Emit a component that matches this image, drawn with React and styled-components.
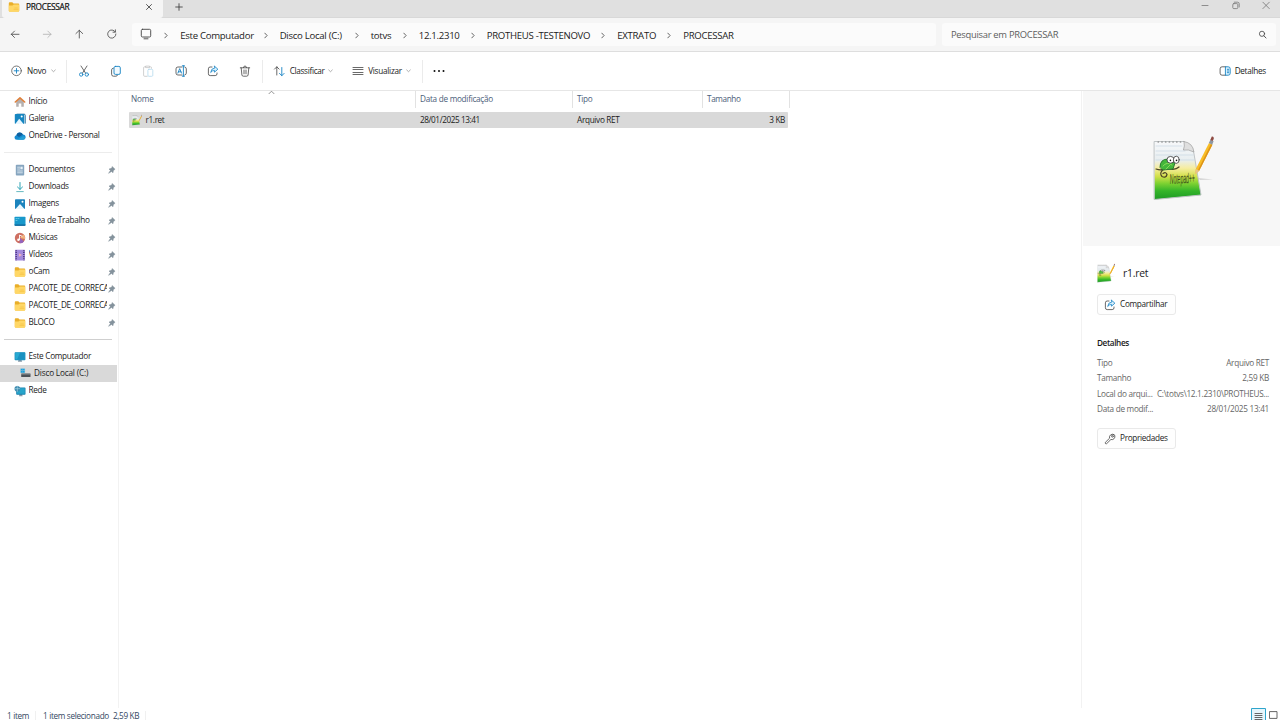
/* eslint-disable react/prop-types */
import React from 'react';
import styled, { createGlobalStyle } from 'styled-components';

const GlobalStyle = createGlobalStyle`
  * { box-sizing: border-box; }
  body {
    margin: 0;
    overflow: hidden;
    font-family: "Open Sans", "Noto Sans", sans-serif;
    font-size: 8.2px;
    color: #1b1b1b;
    background: #fff;
  }
  svg { display: block; flex: none; }
`;

const Window = styled.div`
  display: flex;
  flex-direction: column;
  width: 1280px;
  height: 720px;
  overflow: hidden;
  background: #fff;
`;

const Label = styled.span`
  flex: none;
  white-space: nowrap;
  letter-spacing: ${(p) => p.$ls || 0}px;
`;
const SmallLabel = styled(Label)`
  margin-bottom: 1.5px;
`;

/* title bar */
const TitleBar = styled.div`
  display: flex;
  height: 18px;
  padding-left: 2px;
  background: #e0e0e0;
  border-bottom: 1px solid #d8d8d8;
`;
const Tab = styled.div`
  display: flex;
  align-items: center;
  width: 161px;
  height: 18px;
  padding: 0 10px 5px 6px;
  background: #f5f5f5;
  border-radius: 0 0 3px 3px;
  font-size: 8.3px;
  color: #111;
  -webkit-text-stroke: 0.2px #111;
`;
const TabTitle = styled(Label)`
  flex: 1;
  margin-left: 6px;
`;
const NewTab = styled.div`
  padding: 3px 0 0 11.5px;
`;
const WindowButtons = styled.div`
  display: flex;
  margin-left: auto;
  padding: 1px 9px 0 0;
  gap: 20.5px;
`;

/* navigation */
const NavBar = styled.div`
  display: flex;
  align-items: center;
  height: 34px;
  padding: 0 4px 1px 10px;
  background: #f5f5f5;
  border-bottom: 1px solid #dedede;
`;
const NavButtons = styled.div`
  display: flex;
  gap: 22px;
  width: 122px;
`;
const AddressBox = styled.div`
  display: flex;
  align-items: center;
  width: 804px;
  height: 23px;
  margin-right: 6px;
  padding-left: 8px;
  background: #fbfbfb;
  border-radius: 3px;
  font-size: 9.6px;
`;
const Crumb = styled.div`
  display: flex;
  align-items: center;
  gap: 12.2px;
  width: ${(p) => p.$width}px;
  padding-top: 2px;
`;
const SearchBox = styled.div`
  display: flex;
  align-items: center;
  justify-content: space-between;
  flex: 1;
  height: 23px;
  padding: 0 9px;
  background: #fbfbfb;
  border-radius: 3px;
  font-size: 9.4px;
  color: #5d5d5d;
`;

/* command bar */
const CommandBar = styled.div`
  display: flex;
  align-items: center;
  height: 39px;
  padding: 0 14px 0 10px;
  border-bottom: 1px solid #e6e6e6;
`;
const Command = styled.div`
  display: flex;
  align-items: center;
  gap: ${(p) => p.$gap || 4}px;
  width: ${(p) => p.$width}px;
  margin-left: ${(p) => p.$left || 0}px;
`;
const IconGroup = styled.div`
  display: flex;
  padding: 0 1px;
`;
const IconCommand = styled.div`
  display: flex;
  justify-content: center;
  width: 32.2px;
`;
const Separator = styled.div`
  width: 1px;
  height: 23px;
  background: #ebebeb;
`;
const DetailsToggle = styled.div`
  display: flex;
  align-items: center;
  gap: 4px;
  margin-left: auto;
`;

/* body */
const Body = styled.div`
  display: flex;
  flex: 1;
  min-height: 0;
`;
const Sidebar = styled.nav`
  width: 119px;
  height: 617px;
  padding-top: 2px;
  border-right: 1px solid #f2f2f2;
`;
const SideItem = styled.div`
  display: flex;
  align-items: center;
  width: 117px;
  height: 17px;
  padding-left: ${(p) => (p.$nested ? 20 : 14)}px;
  background: ${(p) => (p.$selected ? '#d9d9d9' : 'transparent')};
`;
const SideLabel = styled(SmallLabel)`
  flex: 1;
  min-width: 0;
  margin-left: ${(p) => (p.$nested ? 3 : 2.5)}px;
  overflow: hidden;
`;
const PinSlot = styled.div`
  width: 10px;
`;
const SideDivider = styled.div`
  width: 108px;
  height: 1px;
  margin: 8px 0 8px 4px;
  background: ${(p) => p.$color};
`;

const FileList = styled.main`
  position: relative;
  flex: 1;
  padding-left: 10px;
`;
const HeaderRow = styled.div`
  display: grid;
  grid-template-columns: 287px 157px 130px 87px;
  height: 17px;
  color: #4c607a;
`;
const HeaderCell = styled.div`
  display: flex;
  align-items: center;
  padding: 0 0 0 ${(p) => p.$pad || 4}px;
  border-right: 1px solid #e2e2e2;
`;
const SortMark = styled.div`
  position: absolute;
  top: -1px;
  left: 149px;
`;
const FileRow = styled.div`
  display: grid;
  grid-template-columns: 287px 157px 130px 84px;
  align-items: center;
  width: 659px;
  height: 16px;
  margin-top: 4px;
  background: #d9d9d9;
  border-radius: 1px;
`;
const FileCell = styled.div`
  display: flex;
  align-items: center;
  justify-content: ${(p) => (p.$right ? 'flex-end' : 'flex-start')};
  gap: 3.5px;
  padding: 0 2px 0 3px;
  padding-left: ${(p) => p.$pad || 3}px;
`;

/* details pane */
const DetailsPane = styled.aside`
  width: 199px;
  height: 617px;
  border-left: 1px solid #f2f2f2;
`;
const Preview = styled.div`
  height: 155px;
  margin-left: 1px;
  padding: 44px 0 0 70px;
  background: #f7f7f7;
`;
const PaneContent = styled.div`
  display: flex;
  flex-direction: column;
  align-items: flex-start;
  padding: 17px 11px 0 15px;
`;
const PaneTitle = styled.div`
  display: flex;
  align-items: center;
  gap: 8px;
  height: 20px;
  font-size: 10.4px;
`;
const PaneButton = styled.button`
  display: flex;
  align-items: center;
  gap: 4px;
  width: 79px;
  height: 21px;
  margin: ${(p) => p.$top}px 0 0;
  padding: 0 0 0 6px;
  background: #fefefe;
  border: 1px solid #e9e9e9;
  border-radius: 3px;
  font: inherit;
  color: #1b1b1b;
`;
const PaneHeading = styled.h2`
  margin: 21px 0 5px;
  font-size: 8.2px;
  font-weight: 600;
  line-height: 14px;
  letter-spacing: -0.38px;
`;
const Property = styled.div`
  display: flex;
  justify-content: space-between;
  align-items: center;
  width: 172px;
  height: 15.5px;
  color: #666;
`;

const StatusBar = styled.footer`
  display: flex;
  align-items: flex-start;
  position: absolute;
  left: 0;
  top: 708px;
  width: 1280px;
  height: 12px;
  padding: 0 2px 0 7px;
  color: #33475f;
`;
const StatusText = styled(Label)`
  width: ${(p) => p.$width}px;
  height: 10px;
  margin-top: 2px;
  line-height: 11px;
`;
const StatusSeparator = styled.div`
  width: 1px;
  height: 9px;
  margin: 3px 7px 0 0;
  background: #f0f0f0;
`;
const ViewModes = styled.div`
  display: flex;
  gap: 3px;
  margin-left: auto;
`;

const Svg = ({ w = 12, h = w, box, children }) => (
  <svg width={w} height={h} viewBox={box || `0 0 ${w} ${h}`} fill="none" strokeLinecap="round" strokeLinejoin="round">
    {children}
  </svg>
);

const dark = '#444';
const blue = '#1683c4';

const Chevron = ({ down }) => (down ? (
  <Svg w={5} h={4}><path d="M.7 1 2.5 2.7 4.3 1" stroke="#8a8a8a" strokeWidth=".7" /></Svg>
) : (
  <Svg w={4} h={7}><path d="M.8 1.1 3.1 3.5.8 5.9" stroke="#555" strokeWidth=".9" /></Svg>
));

const Folder = () => (
  <Svg w={12}>
    <path d="M.8 2.2q0-.9.9-.9h2.6l1.2 1.2h4.8q.9 0 .9.9v6.4q0 .8-.9.8H1.7q-.9 0-.9-.8z" fill="#e9ae29" />
    <path d="M.8 4.4h3.7l1.2-1h4.6q.9 0 .9.8v5.6q0 .9-.9.9H1.7q-.9 0-.9-.9z" fill="#ffd766" />
    <path d="M6 8.4h4M6.8 7h2.5" stroke="#f4bf40" strokeWidth=".6" />
  </Svg>
);

const NotepadFile = ({ w, h }) => {
  const id = `grass${w}`;
  return (
    <Svg w={w} h={h} box="0 0 61 66">
      <defs>
        <linearGradient id={id} x1="0" y1="0" x2="0" y2="1">
          <stop offset="0" stopColor="#f7f8fa" />
          <stop offset=".32" stopColor="#e8eef0" />
          <stop offset=".46" stopColor="#f6eda0" />
          <stop offset=".6" stopColor="#d3e04a" />
          <stop offset=".72" stopColor="#7fd232" />
          <stop offset=".85" stopColor="#35b52a" />
          <stop offset="1" stopColor="#1d9a25" />
        </linearGradient>
      </defs>
      <path d="M45 43l15 1.5-13 .5z" fill="#d5d5d5" />
      <path d="M1.5 6.5H31l9.5 9.5L48 60 1.5 64.5z" fill={`url(#${id})`} stroke="#bfc4c6" strokeWidth="1" />
      <path d="M3 16h29M3 20h37M3 11h26M3 25h38" stroke="#c4d3e1" strokeWidth=".6" />
      <path d="M5 7h25" stroke="#777" strokeWidth="1.1" strokeDasharray=".6 3.1" />
      <path d="M31 6.5q1 5-.6 8.5 5-1 10.5 2Q40 8 31 6.5z" fill="#dfdfdf" stroke="#9d9d9d" strokeWidth=".7" />
      <path d="M3 34q6 2 10-1 9 3 13-1M10 35q-4 3-1 6.5 4 2 5-2-1-3-4-1" stroke="#4c4426" strokeWidth="1.2" />
      <path d="M7 32q0-8 8-8l7 4-2 6-10 1z" fill="#43b63b" stroke="#26732b" strokeWidth=".9" />
      <path d="M10 31q4-5 9-1M13 34l4-4" stroke="#8bdb5a" strokeWidth="1" />
      <ellipse cx="17.6" cy="24.8" rx="3.6" ry="3.4" fill="#fff" stroke="#333" strokeWidth=".8" />
      <ellipse cx="23.3" cy="24.8" rx="2.9" ry="3.6" fill="#fff" stroke="#333" strokeWidth=".8" />
      <circle cx="17.4" cy="25.4" r=".8" fill="#111" />
      <circle cx="23.5" cy="25.4" r=".8" fill="#111" />
      {w > 30 && (
        <text x="0" y="0" transform="translate(17 49) rotate(-3) scale(.46 1.3)" fontFamily="Liberation Sans, sans-serif" fontStyle="italic" fontSize="11" fill="#3a4a18">Notepad++</text>
      )}
      <path d="M42.2 39.2l.6-5.2L56 8l3.4 1.8-13.2 26z" fill="#f8bd25" />
      <path d="M44.9 35.2L58 9l1.4.8-13.2 26z" fill="#dc9219" />
      <path d="M42.2 39.2l.6-5.2 3.4 1.8z" fill="#e6c38c" />
      <path d="M55.8 8l1.8-3.4 3 1.6-1.4 3.6z" fill="#8e98a2" />
      <path d="M57.3 4.9L58.8 1.6q2.4-.6 1.9 2.4l-1 2.1z" fill="#8f4b43" />
    </Svg>
  );
};

const ShareIcon = () => (
  <Svg w={12}>
    <path d="M5 2H3.2Q1.4 2 1.4 3.8v5Q1.4 10.6 3.2 10.6h5q1.8 0 1.8-1.8V8" stroke={dark} strokeWidth=".8" />
    <path d="M7.5 1.2 10.9 4.2 7.5 7.2V5.5Q5 5.4 3.7 7.5 4 3.3 7.5 3z" fill="#d6effc" stroke={blue} strokeWidth=".8" />
  </Svg>
);

const sideIcons = {
  home: (
    <Svg w={12}>
      <path d="M2.2 5.4 6 2l3.8 3.4v5.4H7.3V7.6H4.7v3.2H2.2z" fill="#b5b0af" />
      <path d="M1.3 6 6 1.8 10.7 6" stroke="#e0813b" strokeWidth="1.6" />
    </Svg>
  ),
  gallery: (
    <Svg w={12}>
      <path d="M3 1.2h7.2q1 0 1 1v8" stroke="#1d6f9f" strokeWidth="1" />
      <rect x=".8" y="1" width="9.4" height="10" rx=".8" fill="#1686c1" />
      <path d="M1.2 11l4-5.2 4.4 5.2z" fill="#e9f7ff" />
      <circle cx="7.7" cy="3.5" r="1" fill="#fff" />
    </Svg>
  ),
  cloud: (
    <Svg w={12}>
      <path d="M2.8 9.7Q.5 9.5.5 7.4q0-1.7 1.9-2.1Q3 2.5 5.7 2.4q2.3 0 3.2 2.2 2.7.1 2.7 2.6-.1 2.4-2.5 2.5z" fill="#168bd0" />
      <path d="M2.4 5.3Q3 2.5 5.7 2.4q2.3 0 3.2 2.2L5 6.9z" fill="#0f609f" />
      <path d="M3 9.7 9.3 6l2.2 1.7q-.5 2-2.4 2z" fill="#27a0d6" />
    </Svg>
  ),
  docs: (
    <Svg w={12}>
      <rect x="1.8" y=".8" width="8.4" height="10.6" rx=".9" fill="#86a5bf" />
      <path d="M3.6 3.2h2M3.6 5h2M3.6 7h4.8M3.6 8.8h4.8" stroke="#e6f0f7" strokeWidth=".8" />
      <rect x="6.4" y="2.7" width="2.3" height="2.6" fill="#e6f0f7" />
    </Svg>
  ),
  down: (
    <Svg w={12}>
      <path d="M6 1.5v6.8M3.5 6 6 8.4 8.5 6" stroke="#31a5b6" strokeWidth="1" />
      <path d="M2.7 10.6h6.6" stroke="#66b9c1" strokeWidth="1" />
    </Svg>
  ),
  image: (
    <Svg w={12}>
      <rect x="1" y="1.2" width="10" height="9.8" rx=".8" fill="#1b83bd" />
      <path d="M1.5 11 6 5.9l4.5 5.1z" fill="#eaf7ff" />
      <circle cx="8.5" cy="3.7" r="1" fill="#fff" />
    </Svg>
  ),
  desktop: (
    <Svg w={12}>
      <rect x=".5" y="1.7" width="11" height="9" rx=".8" fill="#1898cb" />
      <path d="M.5 9.4h11v.5q0 .8-.8.8H1.3q-.8 0-.8-.8z" fill="#0e6296" />
      <path d="M2 3.6h1M4 3.6h1M2 5.5h1" stroke="#71d5ef" strokeWidth=".8" />
    </Svg>
  ),
  music: (
    <Svg w={12}>
      <circle cx="6" cy="6" r="5.2" fill="#ce7062" />
      <path d="M6 6 9.5 2.2Q11.6 4.4 11 7.1z" fill="#efb17d" />
      <path d="M6 6 10 9.4Q8.2 11.5 5.6 11.2z" fill="#9464bd" />
      <circle cx="4.4" cy="7.7" r="1.2" fill="#fff" />
      <path d="M5.5 7.7V3l2.4 1.2" stroke="#fff" strokeWidth=".9" />
    </Svg>
  ),
  video: (
    <Svg w={12}>
      <rect x="1" y=".8" width="10" height="10.6" rx=".5" fill="#a389dc" />
      <path d="M2.2 1.2v10M9.8 1.2v10" stroke="#4d3a7d" strokeWidth="1.5" strokeDasharray="1 .9" strokeLinecap="butt" />
      <path d="M4.9 4.3 8 6.1 4.9 7.8z" fill="#f1b5bd" />
    </Svg>
  ),
  folder: <Folder />,
  pc: (
    <Svg w={12}>
      <path d="M4.5 8.8h3l.6 2H3.9z" fill="#8799a7" />
      <rect x=".6" y="1.2" width="10.8" height="8" rx=".8" fill="#1689b9" />
      <rect x="1.2" y="1.7" width="9.6" height="6.8" fill="#28a9d2" />
      <path d="M6 1.7h4.8v6.8H3z" fill="#1a91c1" />
    </Svg>
  ),
  disk: (
    <Svg w={11} h={12}>
      <rect x="1.2" y="5.6" width="9.3" height="3.3" rx=".5" fill="#4b5157" />
      <path d="M1.5 6.1h8.7" stroke="#9ba1a5" strokeWidth=".7" />
      <path d="M.8.8h1.8v1.8H.8zM2.9.8h1.8v1.8H2.9zM.8 2.9h1.8v1.8H.8zM2.9 2.9h1.8v1.8H2.9z" fill="#1aa2df" stroke="#1aa2df" strokeWidth=".2" />
    </Svg>
  ),
  network: (
    <Svg w={12}>
      <path d="M5.5 9h2.6l.5 2.2H5z" fill="#8799a7" />
      <rect x="2.2" y="2.6" width="9.3" height="7.1" rx=".8" fill="#1681ae" />
      <rect x="3" y="3.2" width="7.8" height="5.6" fill="#27a4ca" />
      <circle cx="3.3" cy="3.7" r="2.8" fill="#3a89ae" />
      <path d="M1 3.7h4.7M3.3 1v5.4" stroke="#b1dbea" strokeWidth=".6" />
    </Svg>
  ),
};

const Pin = () => (
  <Svg w={9} h={8}>
    <path d="M5.4.7 8.1 3.3 7.3 3.8 6.3 4.8 6 6.8 4.5 5.5 1.6 7.3 3.4 4.4 2 3 3.9 2.5 4.9 1.5z" fill="#84929c" stroke="#84929c" strokeWidth=".5" />
  </Svg>
);

const crumbs = [
  { text: 'Este Computador', width: 99.5 },
  { text: 'Disco Local (C:)', width: 91 },
  { text: 'totvs', width: 48 },
  { text: '12.1.2310', width: 68 },
  { text: 'PROTHEUS -TESTENOVO', width: 130.5 },
  { text: 'EXTRATO', width: 66 },
  { text: 'PROCESSAR', width: 80 },
];

const places = [
  { icon: 'home', text: 'Início' },
  { icon: 'gallery', text: 'Galeria' },
  { icon: 'cloud', text: 'OneDrive - Personal' },
  { divider: '#ececec' },
  { icon: 'docs', text: 'Documentos', pinned: true },
  { icon: 'down', text: 'Downloads', pinned: true },
  { icon: 'image', text: 'Imagens', pinned: true },
  { icon: 'desktop', text: 'Área de Trabalho', pinned: true },
  { icon: 'music', text: 'Músicas', pinned: true },
  { icon: 'video', text: 'Vídeos', pinned: true },
  { icon: 'folder', text: 'oCam', pinned: true },
  { icon: 'folder', text: 'PACOTE_DE_CORRECA', pinned: true },
  { icon: 'folder', text: 'PACOTE_DE_CORRECA', pinned: true },
  { icon: 'folder', text: 'BLOCO', pinned: true },
  { divider: '#cfcfcf' },
  { icon: 'pc', text: 'Este Computador' },
  { icon: 'disk', text: 'Disco Local (C:)', nested: true, selected: true },
  { icon: 'network', text: 'Rede' },
];

const properties = [
  ['Tipo', 'Arquivo RET'],
  ['Tamanho', '2,59 KB'],
  ['Local do arqui...', 'C:\\totvs\\12.1.2310\\PROTHEUS...'],
  ['Data de modif...', '28/01/2025 13:41'],
];

const Title = () => (
  <TitleBar>
    <Tab>
      <Folder />
      <TabTitle $ls={-0.27}>PROCESSAR</TabTitle>
      <Svg w={8}><path d="M1.5 1.5l5 5M6.5 1.5l-5 5" stroke="#333" strokeWidth=".8" /></Svg>
    </Tab>
    <NewTab>
      <Svg w={8}><path d="M4 .7v6.6M.7 4h6.6" stroke="#333" strokeWidth=".8" /></Svg>
    </NewTab>
    <WindowButtons>
      <Svg w={10}><path d="M2 4.5h6" stroke="#777" strokeWidth=".8" /></Svg>
      <Svg w={10}>
        <rect x="1.8" y="2.6" width="5" height="5" rx="1" stroke="#777" strokeWidth=".8" />
        <path d="M3.3 1.2h3.3q1.6 0 1.6 1.6V6" stroke="#777" strokeWidth=".8" />
      </Svg>
      <Svg w={10}><path d="M1.9 1.2l6.4 6.4M8.3 1.2 1.9 7.6" stroke="#777" strokeWidth=".8" /></Svg>
    </WindowButtons>
  </TitleBar>
);

const Navigation = () => (
  <NavBar>
    <NavButtons>
      <Svg w={10}><path d="M9 5.3H1.3M4.5 2.1 1.3 5.3l3.2 3.2" stroke={dark} strokeWidth=".8" /></Svg>
      <Svg w={10}><path d="M1.3 5.3H9M5.8 2.1 9 5.3 5.8 8.5" stroke="#b0b0b0" strokeWidth=".8" /></Svg>
      <Svg w={10}><path d="M5.3 9V1.3M1.9 4.6l3.4-3.3 3.4 3.3" stroke={dark} strokeWidth=".8" /></Svg>
      <Svg w={11} h={10}><path d="M9.3 2.9A4.1 4.1 0 1 0 9.9 5M9.4.8v2.4H7" stroke={dark} strokeWidth=".8" /></Svg>
    </NavButtons>
    <AddressBox>
      <Svg w={12}>
        <rect x="1.3" y="1.3" width="9.4" height="7.7" rx="1.2" stroke={dark} strokeWidth=".9" />
        <path d="M4 10.8h4" stroke={dark} strokeWidth=".9" />
        <path d="M4.9 9.4v1M7.1 9.4v1" stroke="#888" strokeWidth=".7" />
      </Svg>
      <Svg w={12} h={7} />
      {crumbs.map((crumb) => (
        <Crumb key={crumb.text} $width={crumb.width}>
          <Chevron />
          <Label $ls={-0.29}>{crumb.text}</Label>
        </Crumb>
      ))}
    </AddressBox>
    <SearchBox>
      <Label $ls={-0.28}>Pesquisar em PROCESSAR</Label>
      <Svg w={9}>
        <circle cx="4" cy="3.8" r="2.6" stroke="#444" strokeWidth=".8" />
        <path d="M5.9 5.8 8 8" stroke="#444" strokeWidth=".9" />
      </Svg>
    </SearchBox>
  </NavBar>
);

const Commands = () => (
  <CommandBar>
    <Command $width={56} $gap={5}>
      <Svg w={12}>
        <circle cx="6.5" cy="5.8" r="4.8" stroke="#555" strokeWidth=".8" />
        <path d="M6.5 3.5v4.6M4.2 5.8h4.6" stroke={blue} strokeWidth=".9" />
      </Svg>
      <SmallLabel $ls={-0.2}>Novo</SmallLabel>
      <Chevron down />
    </Command>
    <Separator />
    <IconGroup>
      <IconCommand>
        <Svg w={12}>
          <path d="M3 1l4.7 7.3M9 1 4.3 8.3" stroke={dark} strokeWidth=".8" />
          <circle cx="3.2" cy="9.5" r="1.7" stroke={blue} strokeWidth=".9" />
          <circle cx="8.8" cy="9.5" r="1.7" stroke={blue} strokeWidth=".9" />
        </Svg>
      </IconCommand>
      <IconCommand>
        <Svg w={12}>
          <path d="M3.3 3.2Q1.6 3.4 1.6 4.8v4.5q0 1.9 1.9 1.9h2.4q1.2 0 1.6-.9" stroke={dark} strokeWidth=".8" />
          <rect x="4" y="1.4" width="6.3" height="8" rx="1.4" fill="#f1faff" stroke={blue} strokeWidth=".9" />
        </Svg>
      </IconCommand>
      <IconCommand>
        <Svg w={12}>
          <path d="M3.7 1.8H2.6q-1 0-1 1v7.5q0 1 1 1h2.6M7.6 1.8h.9q1 0 1 .9v.6M4 1.1h3.5v1.5H4z" stroke="#c4c4c4" strokeWidth=".8" />
          <rect x="5.9" y="4.3" width="4.9" height="7" rx="1" stroke="#b4d9ed" strokeWidth=".8" />
        </Svg>
      </IconCommand>
      <IconCommand>
        <Svg w={12}>
          <path d="M7 2H2.9Q1 2 1 3.9v4.2Q1 10 2.9 10H7M9.8 2q1.5.2 1.5 1.9v4.2q0 1.6-1.5 1.9" stroke={dark} strokeWidth=".8" />
          <path d="M8.4.8v10.4M7.3.8h2.2M7.3 11.2h2.2M2.9 8.1l1.8-4.5 1.8 4.5M3.5 6.8h2.4" stroke={blue} strokeWidth=".9" />
        </Svg>
      </IconCommand>
      <IconCommand><ShareIcon /></IconCommand>
      <IconCommand>
        <Svg w={12}>
          <path d="M1.3 2.8h9.4M4.5 2.6Q4.6 1 6 1t1.5 1.6M2.2 3l.7 7q.2 1.2 1.4 1.2h3.4Q8.9 11.2 9.1 10l.7-7M5 5v3.8M7 5v3.8" stroke={dark} strokeWidth=".8" />
        </Svg>
      </IconCommand>
    </IconGroup>
    <Separator />
    <Command $width={79} $left={10} $gap={3.5}>
      <Svg w={13} h={12}>
        <path d="M3.8 10V1.8M1.5 4.1l2.3-2.3 2.3 2.3" stroke={dark} strokeWidth=".8" />
        <path d="M8.8 2.5v8.2M6.5 8.4l2.3 2.3 2.3-2.3" stroke={blue} strokeWidth=".9" />
      </Svg>
      <SmallLabel $ls={-0.3}>Classificar</SmallLabel>
      <Chevron down />
    </Command>
    <Command $width={70}>
      <Svg w={12}><path d="M1 2.5h10M1 4.5h10M1 7.5h10M1 9.5h10" stroke={dark} strokeWidth=".8" /></Svg>
      <SmallLabel $ls={-0.25}>Visualizar</SmallLabel>
      <Chevron down />
    </Command>
    <Separator />
    <Command $width={30} $left={9.5}>
      <Svg w={12}><path d="M1.5 6h.01M6 6h.01M10.5 6h.01" stroke="#111" strokeWidth="2" /></Svg>
    </Command>
    <DetailsToggle>
      <Svg w={12}>
        <path d="M6.8 1.8H3.1q-2 0-2 2v4.4q0 2 2 2h3.7" stroke={dark} strokeWidth=".8" />
        <path d="M6.8 1.8h2.4q2 0 2 2v4.4q0 2-2 2H6.8zM8.3 4.3h1.4M8.3 6h1.4M8.3 7.7h1.4" fill="#e0f5ff" stroke={blue} strokeWidth=".9" />
      </Svg>
      <SmallLabel $ls={-0.28}>Detalhes</SmallLabel>
    </DetailsToggle>
  </CommandBar>
);

const Places = () => (
  <Sidebar>
    {places.map((place, i) => (place.divider ? (
      <SideDivider key={i} $color={place.divider} />
    ) : (
      <SideItem key={i} $nested={place.nested} $selected={place.selected}>
        {sideIcons[place.icon]}
        <SideLabel $nested={place.nested} $ls={place.nested ? -0.17 : -0.27}>{place.text}</SideLabel>
        {place.pinned && <PinSlot><Pin /></PinSlot>}
      </SideItem>
    )))}
  </Sidebar>
);

const Files = () => (
  <FileList>
    <HeaderRow>
      <HeaderCell $pad={2}><SmallLabel $ls={-0.15}>Nome</SmallLabel></HeaderCell>
      <HeaderCell><SmallLabel $ls={-0.27}>Data de modificação</SmallLabel></HeaderCell>
      <HeaderCell><SmallLabel $ls={-0.25}>Tipo</SmallLabel></HeaderCell>
      <HeaderCell><SmallLabel $ls={-0.38}>Tamanho</SmallLabel></HeaderCell>
    </HeaderRow>
    <SortMark><Svg w={7} h={5}><path d="M1 3.7 3.5 1.2 6 3.7" stroke="#777" strokeWidth=".8" /></Svg></SortMark>
    <FileRow>
      <FileCell>
        <NotepadFile w={10} h={12} />
        <SmallLabel $ls={-0.35}>r1.ret</SmallLabel>
      </FileCell>
      <FileCell $pad={4}><SmallLabel $ls={-0.42}>28/01/2025 13:41</SmallLabel></FileCell>
      <FileCell $pad={4}><SmallLabel $ls={-0.3}>Arquivo RET</SmallLabel></FileCell>
      <FileCell $right><SmallLabel $ls={-0.37}>3 KB</SmallLabel></FileCell>
    </FileRow>
  </FileList>
);

const Details = () => (
  <DetailsPane>
    <Preview><NotepadFile w={61} h={66} /></Preview>
    <PaneContent>
      <PaneTitle>
        <NotepadFile w={18} h={20} />
        <Label $ls={-0.25}>r1.ret</Label>
      </PaneTitle>
      <PaneButton $top={11}>
        <ShareIcon />
        <SmallLabel $ls={-0.27}>Compartilhar</SmallLabel>
      </PaneButton>
      <PaneHeading>Detalhes</PaneHeading>
      {properties.map(([name, value]) => (
        <Property key={name}>
          <SmallLabel $ls={-0.28}>{name}</SmallLabel>
          <SmallLabel $ls={-0.28}>{value}</SmallLabel>
        </Property>
      ))}
      <PaneButton $top={11}>
        <Svg w={12}>
          <path d="M9.9 1.5A3.1 3.1 0 0 0 5.6 5.2L1.4 9.3q-.5.8.1 1.3.6.5 1.2 0l4.2-4.1A3.1 3.1 0 0 0 10.7 2.4L9 4.1 7.7 3.9 7.8 2.8z" stroke={dark} strokeWidth=".8" />
        </Svg>
        <SmallLabel $ls={-0.3}>Propriedades</SmallLabel>
      </PaneButton>
    </PaneContent>
  </DetailsPane>
);

const App = () => (
  <Window>
    <GlobalStyle />
    <Title />
    <Navigation />
    <Commands />
    <Body>
      <Places />
      <Files />
      <Details />
    </Body>
    <StatusBar>
      <StatusText $width={28} $ls={-0.33}>1 item</StatusText>
      <StatusSeparator />
      <StatusText $width={70} $ls={-0.32}>1 item selecionado</StatusText>
      <StatusText $width={32} $ls={-0.35}>2,59 KB</StatusText>
      <StatusSeparator />
      <ViewModes>
        <Svg w={15} h={12}>
          <path d="M.5 13V.5h14V13" fill="#e5f5fb" stroke="#2fa5cc" />
          <path d="M4 5.5h7M4 7.5h7M4 9.5h7M4 11.5h7" stroke="#555" strokeWidth=".9" />
        </Svg>
        <Svg w={9} h={12}><rect x=".8" y="3.6" width="7.2" height="6.8" stroke="#666" strokeWidth="1" /></Svg>
      </ViewModes>
    </StatusBar>
  </Window>
);

export default App;
